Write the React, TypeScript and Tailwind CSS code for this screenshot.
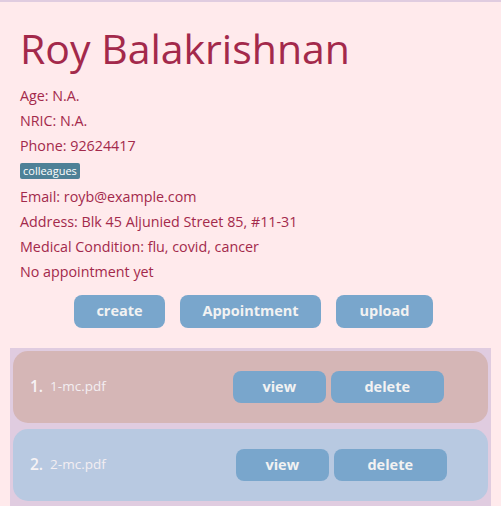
export default function App() {
  const info = [
    "Age: N.A.",
    "NRIC: N.A.",
    "Phone: 92624417",
  ]
  const more = [
    "Email: royb@example.com",
    "Address: Blk 45 Aljunied Street 85, #11-31",
    "Medical Condition: flu, covid, cancer",
    "No appointment yet",
  ]
  const files = [
    { n: "1.", name: "1-mc.pdf", bg: "bg-[#d5b6b6]", gap: "ml-[127px]" },
    { n: "2.", name: "2-mc.pdf", bg: "bg-[#b8c9e1]", gap: "ml-[130px]" },
  ]

  return (
    <div
      className="min-h-screen bg-[#ffeaec] border-t-2 border-[#e0cce0] flex flex-col"
      style={{ fontFamily: '"Open Sans", "Noto Sans", sans-serif' }}
    >
      {/* Header / details */}
      <div className="px-5 pt-[18px]">
        <h1 className="text-[41px] leading-[56px] font-medium text-[#a3294b]">Roy Balakrishnan</h1>
        <div className="mt-[7px] text-[14.3px] leading-[25.2px] text-[#a3294b]">
          {info.map((line) => (
            <div key={line}>{line}</div>
          ))}
          <div className="h-[25.2px] flex items-center">
            <span className="bg-[#4e8197] text-white text-[11px] leading-[16px] px-[3px] rounded-[2px]">
              colleagues
            </span>
          </div>
          {more.map((line) => (
            <div key={line}>{line}</div>
          ))}
        </div>
      </div>

      {/* Actions */}
      <div className="mt-[10px] flex justify-center gap-[15px] pl-[6px]">
        <button className="w-[91px] h-[33px] rounded-[8px] bg-[#79a6cc] text-[#f2f2f2] text-[14.5px] font-bold">
          create
        </button>
        <button className="w-[141px] h-[33px] rounded-[8px] bg-[#79a6cc] text-[#f2f2f2] text-[14.5px] font-bold">
          Appointment
        </button>
        <button className="w-[97px] h-[33px] rounded-[8px] bg-[#79a6cc] text-[#f2f2f2] text-[14.5px] font-bold">
          upload
        </button>
      </div>

      {/* Files */}
      <div className="mt-5 mx-[10px] flex-1 bg-[#e0cce0] px-[3px] pt-[3px] pb-[5px] flex flex-col gap-[6px]">
        {files.map((f) => (
          <div key={f.name} className={`h-[72px] rounded-[15px] ${f.bg} flex items-center pl-[17px]`}>
            <span className="text-[15.5px] font-semibold text-[#f7f3f5]">{f.n}</span>
            <span className="ml-[7px] text-[13.5px] text-[#f3eef2]">{f.name}</span>
            <div className={`${f.gap} flex gap-[5px]`}>
              <button className="w-[93px] h-[32px] rounded-[8px] bg-[#79a6cc] text-[#f2f2f2] text-[14.5px] font-bold">
                view
              </button>
              <button className="w-[113px] h-[32px] rounded-[8px] bg-[#79a6cc] text-[#f2f2f2] text-[14.5px] font-bold">
                delete
              </button>
            </div>
          </div>
        ))}
      </div>
    </div>
  )
}
